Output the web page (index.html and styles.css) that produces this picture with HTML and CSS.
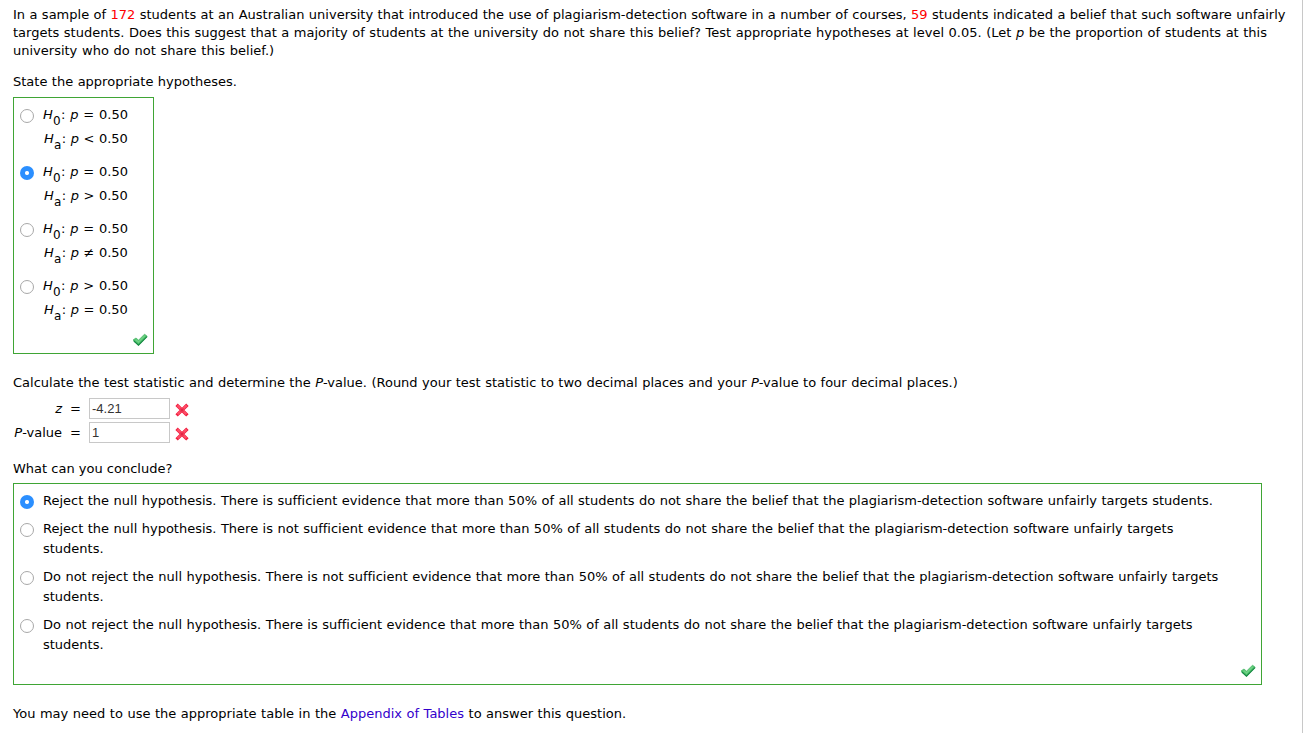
FILE: index.html
```html
<!DOCTYPE html>
<html lang="en">

<head>
    <meta charset="UTF-8">
    <title>Hypothesis Test Question</title>
    <link rel="stylesheet" href="styles.css">
</head>

<body>
    <svg class="defs" width="0" height="0">
        <symbol id="check" viewBox="0 0 16 14">
            <path d="M1 7 L4 5 L6.5 7.2 L12.5 1.2 L15.2 3.2 L6.5 12.2 Z" fill="#4cc26a" stroke="#52b96e" stroke-width="0.8" />
            <path d="M1.8 8 L6.5 12.2 L15 3.6" fill="none" stroke="#168843" stroke-width="1.1" />
            <path d="M3.5 6.6 L6.5 9 L12.8 2.8" fill="none" stroke="#6fd185" stroke-width="1.6" />
        </symbol>
        <symbol id="cross" viewBox="0 0 14 14">
            <path d="M2.8 3 L11.2 11.2 M11.2 3 L2.8 11.2" fill="none" stroke="#f02040" stroke-width="3.4" stroke-linecap="square" />
            <path d="M2.4 2.4 L11.4 11.2 M11.6 2.4 L2.6 11.2" fill="none" stroke="#ff4d68" stroke-width="2.2" />
            <path d="M5.5 5.4 L8.5 8.4 M8.5 5.4 L5.5 8.4" fill="none" stroke="#e02545" stroke-width="1.4" />
        </symbol>
    </svg>

    <div class="question">
        <p class="intro">
            <span class="line l1">In a sample of <span class="red">172</span> students at an Australian university that introduced the use of plagiarism-detection software in a number of courses, <span class="red">59</span> students indicated a belief that such software unfairly</span>
            <span class="line l2">targets students. Does this suggest that a majority of students at the university do not share this belief? Test appropriate hypotheses at level 0.05. (Let <i>p</i> be the proportion of students at this</span>
            <span class="line l3">university who do not share this belief.)</span>
        </p>

        <p class="prompt">State the appropriate hypotheses.</p>
        <div class="box hypotheses">
            <label class="option">
                <input type="radio" name="hyp">
                <span><span class="line"><i>H</i><sub>0</sub>: <i>p</i> = 0.50</span><span class="line alt"><i>H</i><sub>a</sub>: <i>p</i> &lt; 0.50</span></span>
            </label>
            <label class="option">
                <input type="radio" name="hyp" checked>
                <span><span class="line"><i>H</i><sub>0</sub>: <i>p</i> = 0.50</span><span class="line alt"><i>H</i><sub>a</sub>: <i>p</i> &gt; 0.50</span></span>
            </label>
            <label class="option">
                <input type="radio" name="hyp">
                <span><span class="line"><i>H</i><sub>0</sub>: <i>p</i> = 0.50</span><span class="line alt"><i>H</i><sub>a</sub>: <i>p</i> ≠ 0.50</span></span>
            </label>
            <label class="option">
                <input type="radio" name="hyp">
                <span><span class="line"><i>H</i><sub>0</sub>: <i>p</i> &gt; 0.50</span><span class="line alt"><i>H</i><sub>a</sub>: <i>p</i> = 0.50</span></span>
            </label>
            <svg class="check" width="16" height="14"><use href="#check" /></svg>
        </div>

        <p class="calculate">Calculate the test statistic and determine the <i>P</i>-value. (Round your test statistic to two decimal places and your <i>P</i>-value to four decimal places.)</p>
        <div class="answers">
            <label for="z"><i>z</i></label><span class="eq">=</span>
            <input type="text" id="z" value="-4.21">
            <svg class="cross" width="14" height="14"><use href="#cross" /></svg>
            <label for="pvalue"><i>P</i>-value</label><span class="eq">=</span>
            <input type="text" id="pvalue" value="1">
            <svg class="cross" width="14" height="14"><use href="#cross" /></svg>
        </div>

        <p class="prompt conclude">What can you conclude?</p>
        <div class="box conclusions">
            <label class="option">
                <input type="radio" name="con" checked>
                <span><span class="line">Reject the null hypothesis. There is sufficient evidence that more than 50% of all students do not share the belief that the plagiarism-detection software unfairly targets students.</span></span>
            </label>
            <label class="option">
                <input type="radio" name="con">
                <span><span class="line">Reject the null hypothesis. There is not sufficient evidence that more than 50% of all students do not share the belief that the plagiarism-detection software unfairly targets</span><span class="line">students.</span></span>
            </label>
            <label class="option">
                <input type="radio" name="con">
                <span><span class="line">Do not reject the null hypothesis. There is not sufficient evidence that more than 50% of all students do not share the belief that the plagiarism-detection software unfairly targets</span><span class="line">students.</span></span>
            </label>
            <label class="option">
                <input type="radio" name="con">
                <span><span class="line">Do not reject the null hypothesis. There is sufficient evidence that more than 50% of all students do not share the belief that the plagiarism-detection software unfairly targets</span><span class="line">students.</span></span>
            </label>
            <svg class="check" width="16" height="14"><use href="#check" /></svg>
        </div>

        <p class="footnote">You may need to use the appropriate table in the <a href="#">Appendix of Tables</a> to answer this question.</p>
    </div>
</body>

</html>
```
FILE: styles.css
```css
* {
    box-sizing: border-box;
}

body {
    margin: 0;
    background: white;
    color: black;
    font-family: Verdana, "DejaVu Sans", sans-serif;
    font-size: 13px;
    font-variant-ligatures: none;
    line-height: 18px;
    word-spacing: 0.32px;
    overflow: hidden;
}

.defs {
    position: absolute;
}

.question {
    width: 1303px;
    height: 733px;
    padding: 6px 0 0 13px;
    border-right: 1px solid #c8c8c8;
    white-space: nowrap;
}

p {
    margin: 0;
}

.line {
    display: block;
}

.l1 {
    word-spacing: 0.28px;
}

.l2 {
    word-spacing: 0.4px;
}

.l3 {
    word-spacing: 0.6px;
}

.red {
    color: #f00;
}

.prompt {
    margin-top: 13px;
}

.box {
    display: flex;
    flex-direction: column;
    border: 1px solid #3fa535;
    margin-top: 6px;
    padding-left: 6px;
}

.hypotheses {
    width: 141px;
    height: 257px;
    padding-top: 5px;
    gap: 9px;
    word-spacing: 0.7px;
}

.conclusions {
    width: 1249px;
    height: 202px;
    margin-top: 5px;
    padding-top: 7px;
    gap: 8px;
}

.option {
    display: flex;
    gap: 9px;
}

.hypotheses .line {
    height: 24px;
    line-height: 24px;
}

.hypotheses .alt {
    padding-left: 1px;
    word-spacing: 0.4px;
}

.conclusions .line {
    line-height: 20px;
}

sub {
    margin: 0 0.3px;
    font-size: 12px;
    line-height: 0;
    vertical-align: -6px;
}

input[type="radio"] {
    appearance: none;
    flex: none;
    width: 14px;
    height: 14px;
    margin: 6px 0 0;
    border: 1px solid #a8a8a8;
    border-radius: 50%;
    background: white;
}

.conclusions input[type="radio"] {
    margin-top: 4px;
}

input[type="radio"]:checked {
    border: none;
    background: radial-gradient(circle, white 1.5px, #2b8fff 2.5px);
}

.check {
    margin: auto 5px 6px auto;
}

.calculate {
    margin-top: 20px;
}

.answers {
    display: grid;
    grid-template-columns: 49px 27px 81px 14px;
    grid-auto-rows: 21px;
    row-gap: 3px;
    margin-top: 6px;
}

.answers label {
    text-align: right;
    line-height: 21px;
}

.eq {
    padding-left: 8px;
    line-height: 21px;
}

input[type="text"] {
    width: 81px;
    height: 21px;
    padding: 0 2px;
    border: 1px solid #c8c8c8;
    color: #333;
    font: 13px "Liberation Sans", Arial, sans-serif;
}

.cross {
    margin: 5px 0 0 5px;
}

.conclude {
    margin-top: 17px;
    word-spacing: 0;
}

.footnote {
    margin-top: 20px;
    word-spacing: 0.4px;
}

a {
    color: #30c;
    text-decoration: none;
}
```
